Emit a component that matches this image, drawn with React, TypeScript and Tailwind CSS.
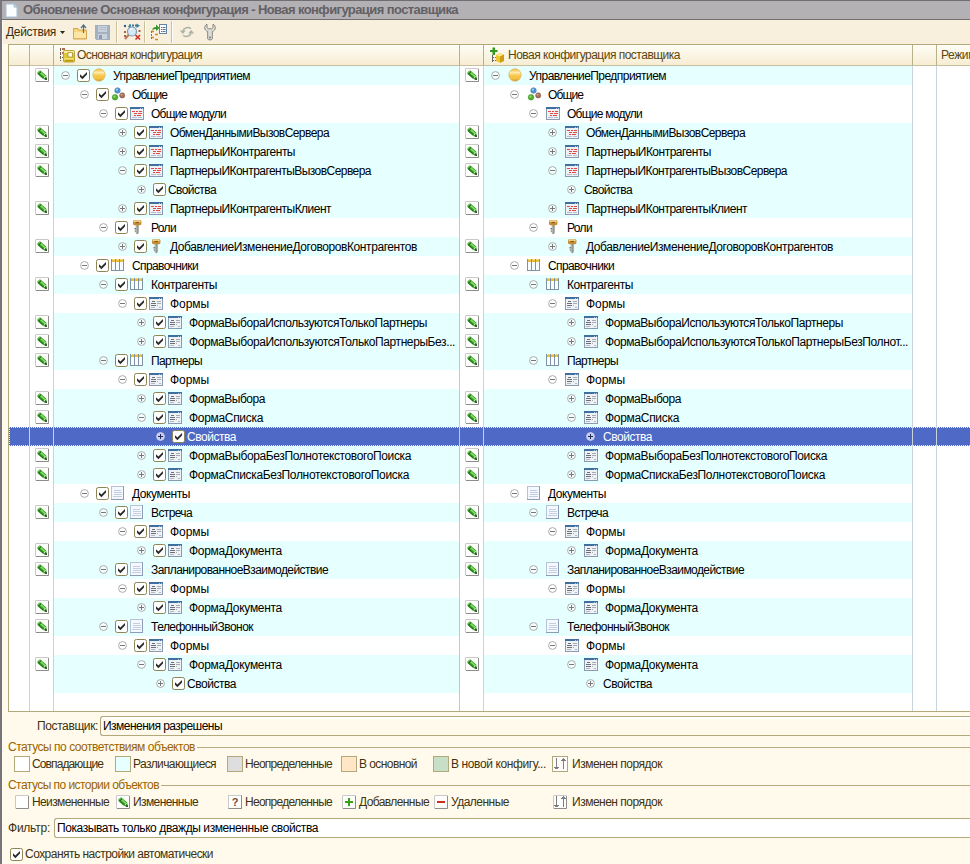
import React, { useLayoutEffect, useRef, useState } from "react";

/** Text set to an exact advance width by spreading the difference over its letters. */
function Fit({ w, children, className = "" }: { w: number; children: string; className?: string }) {
  const ref = useRef<HTMLSpanElement>(null);
  const [spacing, setSpacing] = useState(0);
  useLayoutEffect(() => {
    const el = ref.current;
    if (!el) return;
    el.style.letterSpacing = "0px";
    const natural = el.getBoundingClientRect().width;
    const next = (w - natural) / children.length;
    el.style.letterSpacing = `${next}px`;
    setSpacing(next);
  }, [w, children]);
  return (
    <span ref={ref} className={`shrink-0 whitespace-pre ${className}`} style={{ letterSpacing: spacing }}>
      {children}
    </span>
  );
}

type Kind = "root" | "common" | "module" | "role" | "catalog" | "form" | "doc" | "props";

/** Small window with a blue caption, shared by the module and form icons. */
function WindowFrame({ children }: { children: React.ReactNode }) {
  return (
    <svg viewBox="0 0 16 16" className="block h-4 w-4 shrink-0" shapeRendering="crispEdges">
      <rect x="1" y="2" width="14" height="13" fill="#8a9bb0" />
      <rect x="2" y="4" width="12" height="10" fill="#eef1f5" />
      <rect x="1" y="2" width="14" height="2" fill="#3f6f9f" />
      <rect x="11" y="3" width="1" height="1" fill="#a9c6e2" />
      <rect x="13" y="3" width="1" height="1" fill="#a9c6e2" />
      {children}
    </svg>
  );
}

function KindIcon({ kind }: { kind: Kind }) {
  const cls = "block h-4 w-4 shrink-0";
  switch (kind) {
    case "root":
      return (
        <svg viewBox="0 0 16 16" className={cls}>
          <defs>
            <linearGradient id="ball" x1="0" y1="0" x2="0" y2="1">
              <stop offset="0" stopColor="#f0b93a" />
              <stop offset="0.3" stopColor="#ffedac" />
              <stop offset="0.55" stopColor="#f7c84a" />
              <stop offset="0.8" stopColor="#f5c040" />
              <stop offset="1" stopColor="#d0942a" />
            </linearGradient>
          </defs>
          <circle cx="8" cy="8" r="6.200" fill="url(#ball)" stroke="#dcb260" strokeWidth="0.700" />
        </svg>
      );
    case "common":
      return (
        <svg viewBox="0 0 16 16" className={cls}>
          <circle cx="7.500" cy="4.500" r="2.800" fill="#4f93cf" stroke="#3b76ad" strokeWidth="0.500" />
          <circle cx="6.900" cy="3.700" r="1.100" fill="#9cc9ee" />
          <circle cx="5" cy="11.300" r="2.800" fill="#4fb52c" stroke="#37881c" strokeWidth="0.500" />
          <circle cx="4.400" cy="10.500" r="1" fill="#9be27e" />
          <circle cx="12.200" cy="9.400" r="2.600" fill="#a6725a" stroke="#7c4f3b" strokeWidth="0.500" />
          <circle cx="11.600" cy="8.600" r="0.900" fill="#d5ac98" />
        </svg>
      );
    case "module":
      return (
        <WindowFrame>
          <path d="M3 6h3v1H3zM7 6h2v1H7zM10 6h3v1h-3zM5 8h3v1H5zM9 8h4v1H9zM5 10h2v1H5zM8 10h4v1H8z" fill="#e2483f" />
          <path d="M3 12h5v1H3zM9 12h4v1H9z" fill="#b3bfd0" />
        </WindowFrame>
      );
    case "form":
      return (
        <WindowFrame>
          <path d="M4 6h3v1H4zM3 8h5v1H3zM3 10h5v1H3z" fill="#6c6f75" />
          <path d="M9 6h4v1H9zM9 8h4v1H9zM9 10h1v1H9z" fill="#a6abb4" />
          <path d="M3 12h4v1H3zM11 12h2v1h-2z" fill="#b3b8c0" />
        </WindowFrame>
      );
    case "role":
      return (
        <svg viewBox="0 0 16 16" className={cls}>
          <path d="M6.800 6h2.800v8l-1.400 1.300L6.800 14z" fill="#80807c" />
          <path d="M7.300 6h1v8.200h-1z" fill="#c9c9c4" />
          <path d="M5.400 9h1.600v1.400H5.400zM5.800 11.400H7v1.400H5.800z" fill="#7b7b78" />
          <rect x="4" y="1.200" width="8.400" height="5" rx="1.400" fill="#c48d35" />
          <rect x="4.800" y="1.600" width="6.800" height="2" rx="1" fill="#f5d68c" />
          <rect x="6.400" y="2.900" width="3.600" height="1.200" fill="#8d5d12" />
        </svg>
      );
    case "catalog":
      return (
        <svg viewBox="0 0 16 16" className={cls} shapeRendering="crispEdges">
          <rect x="1" y="2" width="13" height="12" fill="#7e93a3" />
          <rect x="2" y="4" width="3" height="9" fill="#fafdff" />
          <rect x="6" y="4" width="3" height="9" fill="#fafdff" />
          <rect x="10" y="4" width="3" height="9" fill="#fafdff" />
          <path d="M2 2h3v3H2zM6 2h3v3H6zM10 2h3v3h-3z" fill="#e9bd3c" />
          <path d="M2 2h3v1H2zM6 2h3v1H6zM10 2h3v1h-3z" fill="#f8dd72" />
        </svg>
      );
    case "doc":
      return (
        <svg viewBox="0 0 16 16" className={cls} shapeRendering="crispEdges">
          <rect x="1" y="1" width="13" height="14" fill="#8b9db5" />
          <rect x="1" y="1" width="12" height="13" fill="#b5c3d6" />
          <rect x="2" y="2" width="11" height="12" fill="#f5f9ff" />
          <path d="M4 5h7v1H4zM4 7h8v1H4zM4 9h8v1H4zM3 11h9v1H3z" fill="#c2cfe2" />
        </svg>
      );
    default:
      return null;
  }
}

function Expander({ open, selected }: { open: boolean; selected: boolean }) {
  return (
    <svg viewBox="0 0 9 9" className="block h-[9px] w-[9px] shrink-0">
      <circle cx="4.500" cy="4.500" r="3.900" fill={selected ? "#c9d0ec" : "#ffffff"} fillOpacity={selected ? 1 : 0.6} stroke={selected ? "#c9d0ec" : "#a3a3a3"} strokeWidth="0.900" />
      <path d={open ? "M2 4h5v1H2z" : "M2 4h2V2h1v2h2v1H5v2H4V5H2z"} fill={selected ? "#20285c" : "#777777"} shapeRendering="crispEdges" />
    </svg>
  );
}

function Check() {
  return (
    <svg viewBox="0 0 13 13" className="block h-[13px] w-[13px] shrink-0">
      <rect x="0.500" y="0.500" width="12" height="12" rx="1.800" fill="#fff" stroke="#8f8455" />
      <path d="M3 5.200 5.400 7.600 10 3v2.600L5.400 10.200 3 7.800z" fill="#2a2a2a" />
    </svg>
  );
}

function StatusBox({ children }: { children?: React.ReactNode }) {
  return (
    <svg viewBox="0 0 14 14" className="block h-[14px] w-[14px] shrink-0">
      <rect x="0.500" y="0.500" width="13" height="13" rx="0.500" fill="#fefefc" stroke="#c9c9c9" />
      <path d="M13.500 1v12.500H1" fill="none" stroke="#8d8d8d" />
      {children}
    </svg>
  );
}

function PencilBox() {
  return (
    <StatusBox>
      <path d="M2.500 4.200 5 2.200 11.300 7.600 11.600 11.700 8.200 11 2.500 6z" fill="#359a26" />
      <path d="M3.200 5.800 8.600 10.500" stroke="#1d6b17" strokeWidth="0.900" />
      <path d="M5.600 4.600 10 8.500" stroke="#84e05e" strokeWidth="1.600" />
      <path d="M3.200 4.300 4.600 3.200" stroke="#8ad079" strokeWidth="1.200" />
      <path d="M4 5.900 6 3.800" stroke="#185814" strokeWidth="0.800" />
      <path d="M8.700 10.400 10.700 8.100" stroke="#d5f4c8" strokeWidth="0.900" />
      <path d="M9.600 11.400 11.400 9.600 12 12z" fill="#16330f" />
    </StatusBox>
  );
}

function Arrows() {
  return (
    <path
      d="M3 1h1v11H3zM1 10h5v1H1zM2 11h3v1H2zM10 2h1v10h-1zM8 3h5v1H8zM9 2h3v1H9zM10 1h1v1h-1z"
      fill="#7d7d80"
      shapeRendering="crispEdges"
    />
  );
}

interface Node {
  d: number;
  kind: Kind;
  open: boolean;
  diff: boolean;
  name: string;
  w: number;
  right?: string;
  rw?: number;
  selected?: boolean;
}

const n = (d: number, kind: Kind, open: boolean, diff: boolean, name: string, w: number, extra: Partial<Node> = {}): Node => ({
  d, kind, open, diff, name, w, ...extra,
});

const rows: Node[] = [
  n(0, "root", true, true, "УправлениеПредприятием", 137),
  n(1, "common", true, false, "Общие", 35),
  n(2, "module", true, false, "Общие модули", 75),
  n(3, "module", false, true, "ОбменДаннымиВызовСервера", 159),
  n(3, "module", false, true, "ПартнерыИКонтрагенты", 125),
  n(3, "module", true, true, "ПартнерыИКонтрагентыВызовСервера", 201),
  n(4, "props", false, true, "Свойства", 48),
  n(3, "module", false, true, "ПартнерыИКонтрагентыКлиент", 161),
  n(2, "role", true, false, "Роли", 25),
  n(3, "role", false, true, "ДобавлениеИзменениеДоговоровКонтрагентов", 247),
  n(1, "catalog", true, false, "Справочники", 66),
  n(2, "catalog", true, true, "Контрагенты", 66),
  n(3, "form", true, false, "Формы", 39),
  n(4, "form", false, true, "ФормаВыбораИспользуютсяТолькоПартнеры", 238),
  n(4, "form", false, true, "ФормаВыбораИспользуютсяТолькоПартнерыБез...", 266, {
    right: "ФормаВыбораИспользуютсяТолькоПартнерыБезПолнот...",
    rw: 303,
  }),
  n(2, "catalog", true, true, "Партнеры", 51),
  n(3, "form", true, false, "Формы", 39),
  n(4, "form", false, true, "ФормаВыбора", 76),
  n(4, "form", true, true, "ФормаСписка", 74),
  n(5, "props", false, true, "Свойства", 49, { selected: true }),
  n(4, "form", false, true, "ФормаВыбораБезПолнотекстовогоПоиска", 222),
  n(4, "form", false, true, "ФормаСпискаБезПолнотекстовогоПоиска", 220),
  n(1, "doc", true, false, "Документы", 58),
  n(2, "doc", true, true, "Встреча", 41),
  n(3, "form", true, false, "Формы", 39),
  n(4, "form", false, true, "ФормаДокумента", 93),
  n(2, "doc", true, true, "ЗапланированноеВзаимодействие", 177),
  n(3, "form", true, false, "Формы", 39),
  n(4, "form", false, true, "ФормаДокумента", 93),
  n(2, "doc", true, true, "ТелефонныйЗвонок", 102),
  n(3, "form", true, false, "Формы", 39),
  n(4, "form", true, true, "ФормаДокумента", 93),
  n(5, "props", false, true, "Свойства", 49),
];

const COLS = "grid grid-cols-[21px_24px_406px_24px_429px_24px_33px]";

function TreeCell({ row, checks }: { row: Node; checks: boolean }) {
  const isProps = row.kind === "props";
  const bg = row.selected ? "bg-[#4f69c6] text-white" : row.diff ? "bg-[#e6ffff]" : "bg-white";
  const label = checks ? row.name : row.right ?? row.name;
  const width = checks ? row.w : row.rw ?? row.w;
  return (
    <div className={`flex h-full items-center overflow-hidden pl-[7px] ${bg}`}>
      <span className="shrink-0" style={{ width: row.d * 19 }} />
      <Expander open={row.open} selected={!!row.selected} />
      {checks ? (
        <span className="ml-[7px] flex h-[19px] shrink-0 items-center">
          <Check />
          {isProps ? <span className="w-[2px]" /> : <span className="-mt-px mr-[6px] ml-[1px]"><KindIcon kind={row.kind} /></span>}
        </span>
      ) : isProps ? (
        <span className="w-[8px] shrink-0" />
      ) : (
        <span className="-mt-px mr-[6px] ml-[7px] shrink-0"><KindIcon kind={row.kind} /></span>
      )}
      <Fit w={width} className="pt-[2px] leading-[19px]">{label}</Fit>
    </div>
  );
}

function TreeRow({ row }: { row: Node }) {
  const pencil = row.diff && row.kind !== "props";
  const sel = row.selected;
  const plain = sel ? "bg-[#4f69c6]" : "";
  const cell = "h-[19px] border-r border-[#c9d3de]";
  return (
    <div className={`${COLS} relative h-[19px]`}>
      <div className={`${cell} ${plain}`} />
      <div className={`${cell} ${plain} flex items-center pb-px pl-[5px]`}>{pencil && <PencilBox />}</div>
      <div className="h-[19px] border-r border-[#cdc8b4]"><TreeCell row={row} checks /></div>
      <div className={`${cell} ${plain} flex items-center pb-px pl-[5px]`}>{pencil && <PencilBox />}</div>
      <div className={cell}><TreeCell row={row} checks={false} /></div>
      <div className={`${cell} ${plain}`} />
      <div className={plain} />
      {sel && <div className="absolute inset-0 border border-r-0 border-dotted border-[#e8ecff]" />}
    </div>
  );
}

function MainConfigIcon() {
  return (
    <svg viewBox="0 0 16 16" className="block h-4 w-4 shrink-0">
      <path d="M1.500 1v13M1 2.500h3M1 6.500h3M1 10.500h3" stroke="#6c6258" strokeDasharray="1 1" fill="none" />
      <path d="M3 1h3v2H3zM3 5h2v2H3z" fill="#b4674b" />
      <rect x="4.500" y="3.500" width="11" height="11.500" rx="1" fill="#dfc53a" stroke="#b3941f" strokeWidth="0.800" />
      <path d="M5 4h10v2H5z" fill="#f9ee9c" />
      <rect x="9" y="5.500" width="4.500" height="4.500" fill="#fffbe0" stroke="#9e8a2a" strokeWidth="0.700" />
      <path d="M5 11h10v1.500H5z" fill="#f3df6c" />
      <path d="M6 13h8v1.500H6z" fill="#b59a19" />
    </svg>
  );
}

function NewConfigIcon() {
  return (
    <svg viewBox="0 0 16 16" className="block h-4 w-4 shrink-0">
      <path d="M3.500 8v7M3 10.500h4M3 13.500h4" stroke="#5f6a70" fill="none" strokeDasharray="2 1" />
      <path d="M3.500 0.500H6V3h2.500v2H6v3H3.500V5H1V3h2.500z" fill="#2f9b1d" />
      <path d="M7 8 10.500 6 15 7.500v6.500l-4 1.700L7 14z" fill="#ecc62c" />
      <path d="M7 8 11 9.500 15 7.500 10.500 6z" fill="#fbe98c" />
      <path d="M11 9.500 15 7.500v6.500l-4 1.700z" fill="#cf9d14" />
    </svg>
  );
}

function ToolbarSeparator() {
  return <div className="h-[22px] w-[2px] shrink-0 border-l border-[#c9c19b] bg-white" />;
}

function Toolbar() {
  return (
    <div className="flex h-[24px] items-center bg-[#f8f0dc] pl-[3px] text-[#3a2d0d]">
      <Fit w={50}>Действия</Fit>
      <svg viewBox="0 0 5 3" className="ml-[4px] block h-[3px] w-[5px]"><path d="M0 0h5L2.500 3z" fill="#2d250f" /></svg>
      <svg viewBox="0 0 16 16" className="ml-[7px] block h-4 w-4">
        <path d="M1.500 4.500h4.500l1 1.500h7.500v9h-13z" fill="#f6d67c" stroke="#d0a047" strokeWidth="0.900" />
        <path d="M2 8h12v6.500H2z" fill="#fbe6a6" />
        <path d="M2 14.500h12" stroke="#dfb45a" />
        <path d="M11.500 9V1.500M9 4l2.500-3L14 4" stroke="#4c6d88" strokeWidth="1.200" fill="none" />
      </svg>
      <svg viewBox="0 0 16 16" className="ml-[6px] block h-4 w-4" shapeRendering="crispEdges">
        <path d="M1 1h15v15H2l-1-1z" fill="#a3b1c1" />
        <rect x="4" y="2" width="9" height="6" fill="#c9d2dc" />
        <path d="M5 3h7v1H5zM5 5h7v1H5z" fill="#b2bfcc" />
        <rect x="4" y="10" width="9" height="5" fill="#c9d2dc" />
        <rect x="5" y="11" width="3" height="4" fill="#8c9cae" />
      </svg>
      <span className="w-[6px]" />
      <ToolbarSeparator />
      <svg viewBox="0 0 18 18" className="ml-[5px] block h-[18px] w-[18px]">
        <path d="M6 2.500h8" stroke="#2b79a0" strokeWidth="1.800" strokeDasharray="2 1" />
        <path d="M5 3.500 7.500 1v5zM13.500 0.500 17 2.800 13.500 5z" fill="#3e7f9b" />
        <circle cx="2" cy="3" r="1.200" fill="#275f9c" />
        <path d="M6 11.500 2 16" stroke="#bd7c60" strokeWidth="2.200" />
        <circle cx="9" cy="8.500" r="4.500" fill="#d3e9f8" stroke="#8298ad" strokeWidth="1.200" />
        <path d="M7 7a3 3 0 0 1 3-1.200" stroke="#fff" fill="none" />
        <path d="m12.500 12 4.500 4.500m0-4.500-4.500 4.500" stroke="#cf3328" strokeWidth="1.700" />
        <path d="M1 8h2v2H1zM15.500 7h2v2h-2zM1 12h2v2H1z" fill="#a6644b" />
      </svg>
      <span className="w-[3px]" />
      <ToolbarSeparator />
      <svg viewBox="0 0 18 18" className="ml-[4px] block h-[18px] w-[18px]">
        <path d="M1 8.500h3M5 11.500h3M1 14.500h3M5 16.500h3" stroke="#cf8a2c" strokeWidth="1.300" />
        <path d="M1.500 8v9" stroke="#4d7da0" strokeDasharray="2 1" />
        <path d="M2 7.500C2.500 5 4 4 6 4V1.500L9.500 5 6 8V6C4.500 6 3 6.500 2 7.500z" fill="#31942a" />
        <rect x="9.500" y="1.500" width="7" height="9" fill="#f7faff" stroke="#6383a7" />
        <path d="M11 4.500h1.500M11 6.500h1.500M11 8.500h1.500" stroke="#c0504a" />
        <path d="M13 4.500h2.500M13 6.500h2.500M13 8.500h2.500" stroke="#4678aa" />
      </svg>
      <span className="w-[3px]" />
      <ToolbarSeparator />
      <svg viewBox="0 0 16 16" className="ml-[6px] block h-4 w-4">
        <path d="M4 6.500a4.800 4.200 0 0 1 8-1.700M12 9.500a4.800 4.200 0 0 1-8 1.700" stroke="#a8b2a6" strokeWidth="1.500" fill="none" />
        <path d="M0.800 6.500h6L3.800 10zM9.200 9.500h6L12.200 6z" fill="#a8b2a6" />
      </svg>
      <svg viewBox="0 0 16 18" className="ml-[7px] block h-[18px] w-4">
        <path
          d="M5 1.200v3.300l1.500 1.300h3L11 4.500V1.200c1.600.8 2.300 2 2.300 3.600 0 1.700-1 2.900-3 3.700v7.300c0 1.500-4.600 1.500-4.600 0V8.500c-2-.8-3-2-3-3.700 0-1.600.7-2.800 2.300-3.600z"
          fill="#deddd9"
          stroke="#85857f"
          strokeWidth="1"
        />
        <circle cx="8" cy="14.500" r="1" fill="#77776f" />
      </svg>
    </div>
  );
}

function HeaderCell({ last = false, children }: { last?: boolean; children?: React.ReactNode }) {
  return (
    <div className={`flex h-[21px] items-center overflow-hidden border-b ${last ? "" : "border-r"} border-r-[#b9b188] border-b-[#c8bfa0] bg-linear-to-b from-[#fffdf6] to-[#f7edd2] text-[#5c4510]`}>
      {children}
    </div>
  );
}

function Swatch({ color, children }: { color: string; children?: React.ReactNode }) {
  return <span className={`flex h-4 w-4 shrink-0 items-center justify-center border border-[#b1a97a] ${color}`}>{children}</span>;
}

function Group({ title, w, children }: { title: string; w: number; children: React.ReactNode }) {
  return (
    <section className="h-[38px]">
      <div className="flex h-[16px] items-center pl-[5px] text-[#9a6400]">
        <Fit w={w}>{title}</Fit>
        <span className="ml-[2px] h-px flex-1 bg-[#b5ad80]" />
      </div>
      <div className="grid h-[18px] grid-cols-[101px_112px_114px_92px_119px_1fr] items-center pl-[11px]">{children}</div>
    </section>
  );
}

const item = "flex items-center gap-[2px]";

export default function App() {
  return (
    <div className="flex h-[864px] w-[970px] flex-col overflow-hidden border-l-2 border-[#77757b] bg-[#fffaec] font-['Liberation_Sans',Arial,sans-serif] text-[12px] leading-[16px] text-black">
      <header className="flex h-[20px] shrink-0 items-center border-y border-[#716d72] bg-[#b4b1b5] pl-[3px]">
        <svg viewBox="0 0 13 15" className="block h-[15px] w-[13px]">
          <path d="M1 1h8l3 3v10H1z" fill="#fbfdff" stroke="#a9c0d8" />
          <path d="M9 1v3h3" fill="#cfe0f0" stroke="#9db4cc" />
        </svg>
        <span className="w-[5px]" />
        <Fit w={435} className="text-[13px] font-bold text-[#626064]">Обновление Основная конфигурация - Новая конфигурация поставщика</Fit>
      </header>
      <div className="pl-[1px]">
        <Toolbar />
      </div>

      <main className="ml-[6px] flex h-[668px] shrink-0 flex-col border-y border-l border-[#b1a97a] bg-white">
        <div className={COLS}>
          <HeaderCell />
          <HeaderCell />
          <HeaderCell><span className="mr-[2px] ml-[5px]"><MainConfigIcon /></span><Fit w={125}>Основная конфигурация</Fit></HeaderCell>
          <HeaderCell />
          <HeaderCell><span className="mr-[3px] ml-[5px]"><NewConfigIcon /></span><Fit w={172}>Новая конфигурация поставщика</Fit></HeaderCell>
          <HeaderCell />
          <HeaderCell last><span className="ml-[4px]"><Fit w={35}>Режим</Fit></span></HeaderCell>
        </div>
        {rows.map((row, i) => <TreeRow key={i} row={row} />)}
        <div className={`${COLS} flex-1`}>
          <div className="border-r border-[#c9d3de]" />
          <div className="border-r border-[#c9d3de]" />
          <div className="border-r border-[#cdc8b4]" />
          <div className="border-r border-[#c9d3de]" />
          <div className="border-r border-[#c9d3de]" />
          <div className="border-r border-[#c9d3de]" />
          <div />
        </div>
      </main>

      <footer className="flex flex-col pl-[1px] text-[#40320f]">
        <div className="mt-[4px] flex h-[20px] items-center pl-[34px]">
          <Fit w={61}>Поставщик:</Fit>
          <div className="ml-[2px] flex h-[20px] flex-1 items-center rounded-l-[3px] border border-r-0 border-[#b1a97a] bg-[linear-gradient(#ffffff_2px,#fffaec_2px)] pl-[2px] text-black"><Fit w={119}>Изменения разрешены</Fit></div>
        </div>
        <div className="mt-[3px]">
          <Group title="Статусы по соответствиям объектов" w={187}>
            <div className={item}><Swatch color="bg-white" /><Fit w={71}>Совпадающие</Fit></div>
            <div className={item}><Swatch color="bg-[#e6ffff]" /><Fit w={83}>Различающиеся</Fit></div>
            <div className={item}><Swatch color="bg-[#dedede]" /><Fit w={87}>Неопределенные</Fit></div>
            <div className={item}><Swatch color="bg-[#ffe6c6]" /><Fit w={58}>В основной</Fit></div>
            <div className={item}><Swatch color="bg-[#c6dfc6]" /><Fit w={95}>В новой конфигу...</Fit></div>
            <div className={item}>
              <Swatch color="bg-[#fffefa]"><svg viewBox="0 0 14 14" className="h-[14px] w-[14px] shrink-0"><Arrows /></svg></Swatch>
              <span className="ml-[2px]"><Fit w={90}>Изменен порядок</Fit></span>
            </div>
          </Group>
          <Group title="Статусы по истории объектов" w={151}>
            <div className={item}><span className="mx-px"><StatusBox /></span><Fit w={77}>Неизмененные</Fit></div>
            <div className={item}><span className="mx-px"><PencilBox /></span><Fit w={65}>Измененные</Fit></div>
            <div className={item}>
              <span className="mx-px flex h-[14px] w-[14px] items-center justify-center border border-t-[#c9c9c9] border-r-[#8d8d8d] border-b-[#8d8d8d] border-l-[#c9c9c9] bg-[#fefefc] text-[11px] leading-[12px] font-bold text-[#7d4a36]">?</span>
              <Fit w={87}>Неопределенные</Fit>
            </div>
            <div className={item}>
              <span className="mx-px"><StatusBox><path d="M6 3h2v3h3v2H8v3H6V8H3V6h3z" fill="#37a319" /></StatusBox></span>
              <Fit w={70}>Добавленные</Fit>
            </div>
            <div className={item}>
              <span className="mx-px"><StatusBox><path d="M3 6h8v2H3z" fill="#cf2b18" /></StatusBox></span>
              <Fit w={58}>Удаленные</Fit>
            </div>
            <div className={item}>
              <span className="mx-px"><StatusBox><Arrows /></StatusBox></span>
              <span className="ml-[2px]"><Fit w={90}>Изменен порядок</Fit></span>
            </div>
          </Group>
        </div>
        <div className="mt-[3px] flex h-[20px] items-center pl-[5px]">
          <Fit w={42}>Фильтр:</Fit>
          <div className="ml-[4px] flex h-[20px] flex-1 items-center rounded-l-[3px] border border-r-0 border-[#b1a97a] bg-white pl-[2px] text-black"><Fit w={261}>Показывать только дважды измененные свойства</Fit></div>
        </div>
        <div className="mt-[8px] flex h-[16px] items-center gap-[2px] pl-[7px]">
          <Check />
          <Fit w={188}>Сохранять настройки автоматически</Fit>
        </div>
      </footer>
    </div>
  );
}
